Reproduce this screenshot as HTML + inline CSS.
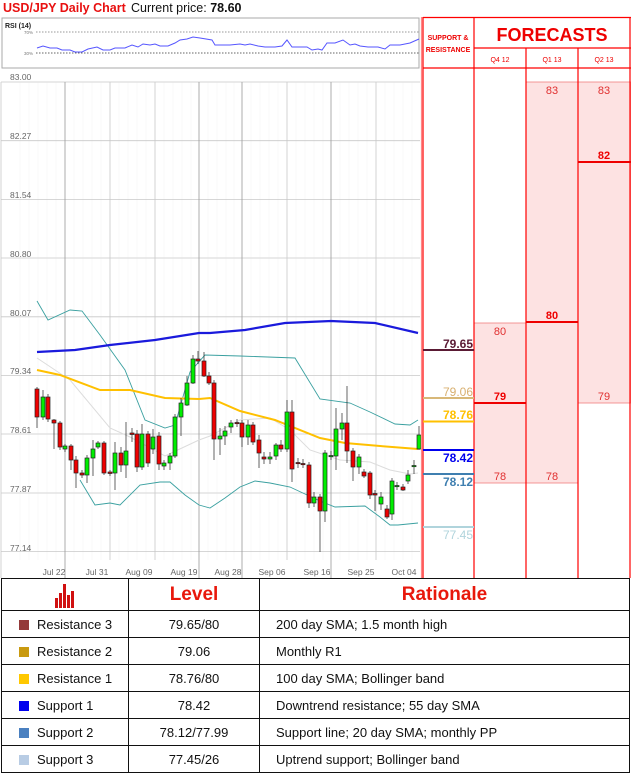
<!DOCTYPE html>
<html><head><meta charset="utf-8"><style>
body{margin:0;width:631px;height:777px;overflow:hidden;background:#fff;font-family:"Liberation Sans",sans-serif}
svg{position:absolute;left:0;top:0}
table{position:absolute;left:1px;top:578px;width:629px;border-collapse:collapse;font-family:"Liberation Sans",sans-serif;font-size:13px;color:#111}
td{border:1.5px solid #111;height:26px;padding:0}
.h td{height:31px;font-weight:bold;color:#e8180c;font-size:19px;text-align:center}
.c{text-align:center}
.sq{display:inline-block;width:10px;height:10px;margin:0 8px 0 17px;vertical-align:-1px}
.r{padding-left:16px}
.ic{position:static;display:block;margin:2px auto 0}
</style></head><body>
<svg width="631" height="578" viewBox="0 0 631 578" font-family="Liberation Sans, sans-serif">
<text x="3" y="12" font-size="12.5" font-weight="bold" fill="#e81010">USD/JPY Daily Chart</text>
<text x="131" y="12" font-size="12.5" fill="#111">Current price: <tspan font-weight="bold">78.60</tspan></text>
<rect x="2" y="18" width="417" height="50" fill="#fff" stroke="#aaa"/>
<text x="5" y="28" font-size="7" font-weight="bold" fill="#222">RSI (14)</text>
<line x1="36" y1="32" x2="419" y2="32" stroke="#777" stroke-dasharray="1.5,1.5" stroke-width="0.8"/>
<line x1="36" y1="53" x2="419" y2="53" stroke="#333" stroke-dasharray="1.5,1.5" stroke-width="0.8"/>
<text x="24" y="34" font-size="4.5" fill="#777">70%</text>
<text x="24" y="55" font-size="4.5" fill="#777">30%</text>
<polyline fill="none" stroke="#5555ff" stroke-width="1" points="37,48 43,46 50,48 57,48 62,50 70,50 75,52 82,52 88,49 97,47 103,50 110,50 115,48 125,48 132,45 138,47 143,44 150,45 155,44 160,46 168,46 175,43 180,40 187,39 193,37 200,38 212,40 215,45 230,45 240,44 245,45 250,44 258,46 265,47 275,47 282,46 287,40 292,47 300,47 307,47 312,50 318,49 322,50 327,43 335,43 343,40 350,45 355,44 360,46 368,47 378,47 385,49 390,45 400,45 410,43 419,39"/>
<g stroke="#f5f5f5" stroke-width="0.6">
<line x1="20" y1="82" x2="20" y2="560"/><line x1="29" y1="82" x2="29" y2="560"/><line x1="38" y1="82" x2="38" y2="560"/><line x1="47" y1="82" x2="47" y2="560"/><line x1="56" y1="82" x2="56" y2="560"/>
<line x1="74" y1="82" x2="74" y2="560"/><line x1="83" y1="82" x2="83" y2="560"/><line x1="92" y1="82" x2="92" y2="560"/><line x1="101" y1="82" x2="101" y2="560"/>
<line x1="119" y1="82" x2="119" y2="560"/><line x1="128" y1="82" x2="128" y2="560"/><line x1="137" y1="82" x2="137" y2="560"/><line x1="146" y1="82" x2="146" y2="560"/>
<line x1="164" y1="82" x2="164" y2="560"/><line x1="173" y1="82" x2="173" y2="560"/><line x1="182" y1="82" x2="182" y2="560"/><line x1="191" y1="82" x2="191" y2="560"/>
<line x1="208" y1="82" x2="208" y2="560"/><line x1="217" y1="82" x2="217" y2="560"/><line x1="226" y1="82" x2="226" y2="560"/><line x1="234" y1="82" x2="234" y2="560"/>
<line x1="251" y1="82" x2="251" y2="560"/><line x1="260" y1="82" x2="260" y2="560"/><line x1="269" y1="82" x2="269" y2="560"/><line x1="278" y1="82" x2="278" y2="560"/>
<line x1="296" y1="82" x2="296" y2="560"/><line x1="305" y1="82" x2="305" y2="560"/><line x1="314" y1="82" x2="314" y2="560"/><line x1="323" y1="82" x2="323" y2="560"/>
<line x1="340" y1="82" x2="340" y2="560"/><line x1="349" y1="82" x2="349" y2="560"/><line x1="358" y1="82" x2="358" y2="560"/><line x1="367" y1="82" x2="367" y2="560"/>
<line x1="385" y1="82" x2="385" y2="560"/><line x1="394" y1="82" x2="394" y2="560"/><line x1="403" y1="82" x2="403" y2="560"/><line x1="412" y1="82" x2="412" y2="560"/>
</g>
<g stroke="#c8c8c8" stroke-width="0.8">
<line x1="1" y1="82" x2="420" y2="82"/><line x1="1" y1="140.7" x2="420" y2="140.7"/><line x1="1" y1="199.4" x2="420" y2="199.4"/><line x1="1" y1="258" x2="420" y2="258"/><line x1="1" y1="316.8" x2="420" y2="316.8"/><line x1="1" y1="375.5" x2="420" y2="375.5"/><line x1="1" y1="434" x2="420" y2="434"/><line x1="1" y1="493" x2="420" y2="493"/><line x1="1" y1="551.6" x2="420" y2="551.6"/>
<line x1="1" y1="82" x2="1" y2="578"/>
<line x1="110" y1="82" x2="110" y2="560"/><line x1="155" y1="82" x2="155" y2="560"/><line x1="287" y1="82" x2="287" y2="560"/><line x1="376" y1="82" x2="376" y2="560"/>
</g>
<g stroke="#9a9a9a" stroke-width="0.8">
<line x1="65" y1="82" x2="65" y2="578"/><line x1="199" y1="82" x2="199" y2="578"/><line x1="242" y1="82" x2="242" y2="578"/><line x1="331" y1="82" x2="331" y2="578"/>
</g>
<g font-size="8.5" fill="#666">
<text x="10" y="80">83.00</text><text x="10" y="139">82.27</text><text x="10" y="198">81.54</text><text x="10" y="257">80.80</text><text x="10" y="316">80.07</text><text x="10" y="374">79.34</text><text x="10" y="433">78.61</text><text x="10" y="492">77.87</text><text x="10" y="551">77.14</text>
</g>
<g font-size="8.5" fill="#666" text-anchor="middle">
<text x="54" y="575">Jul 22</text><text x="97" y="575">Jul 31</text><text x="139" y="575">Aug 09</text><text x="184" y="575">Aug 19</text><text x="228" y="575">Aug 28</text><text x="272" y="575">Sep 06</text><text x="317" y="575">Sep 16</text><text x="361" y="575">Sep 25</text><text x="404" y="575">Oct 04</text>
</g>
<polyline fill="none" stroke="#dcdcdc" stroke-width="1" points="37,358 70,380 110,428 130,437 165,456 199,440 210,436 240,420 270,418 290,430 310,450 340,460 370,462 390,470 410,474 418,473"/>
<polyline fill="none" stroke="#3aa0a0" stroke-width="0.9" points="37,301 48,320 70,310 82,311 100,335 125,370 145,420 165,428 175,425 190,372 205,355 240,356 295,358 320,399 350,403 370,412 395,424 410,425 418,420"/>
<polyline fill="none" stroke="#3aa0a0" stroke-width="0.9" points="80,480 95,505 110,503 120,505 140,485 160,482 170,482 185,495 199,505 210,508 225,498 240,487 255,481 270,483 290,487 320,501 335,507 365,506 380,517 390,525 398,525 418,523"/>
<polyline fill="none" stroke="#ffc000" stroke-width="2" points="37,370 60,375 100,390 130,390 165,398 199,399 210,398 240,411 275,420 320,438 345,443 380,446 418,449"/>
<polyline fill="none" stroke="#1a1adc" stroke-width="2.2" points="37,352 75,350 110,345 155,340 199,333 210,333 245,330 285,323 331,321 375,323 418,333"/>
<g stroke="#222" stroke-width="0.7">
<line x1="37" y1="387" x2="37" y2="428"/><rect x="35" y="389" width="4" height="28" fill="#e00"/>
<line x1="43" y1="390" x2="43" y2="420"/><rect x="41" y="397" width="4" height="20" fill="#0e0"/>
<line x1="48" y1="394" x2="48" y2="422"/><rect x="46" y="397" width="4" height="22" fill="#e00"/>
<line x1="54" y1="419" x2="54" y2="449"/><rect x="52" y="420" width="4" height="3" fill="#e00"/>
<line x1="60" y1="421" x2="60" y2="450"/><rect x="58" y="423" width="4" height="24" fill="#e00"/>
<line x1="65" y1="444" x2="65" y2="452"/><rect x="63" y="446" width="4" height="3" fill="#0e0"/>
<line x1="71" y1="444" x2="71" y2="470"/><rect x="69" y="446" width="4" height="14" fill="#e00"/>
<line x1="76" y1="456" x2="76" y2="488"/><rect x="74" y="460" width="4" height="13" fill="#e00"/>
<line x1="82" y1="470" x2="82" y2="478"/><rect x="80" y="473" width="4" height="2" fill="#e00"/>
<line x1="87" y1="455" x2="87" y2="483"/><rect x="85" y="458" width="4" height="17" fill="#0e0"/>
<line x1="93" y1="440" x2="93" y2="476"/><rect x="91" y="449" width="4" height="9" fill="#0e0"/>
<line x1="98" y1="441" x2="98" y2="449"/><rect x="96" y="443" width="4" height="4" fill="#0e0"/>
<line x1="104" y1="441" x2="104" y2="475"/><rect x="102" y="443" width="4" height="30" fill="#e00"/>
<line x1="110" y1="470" x2="110" y2="476"/><rect x="108" y="472" width="4" height="1.5" fill="#e00"/>
<line x1="115" y1="442" x2="115" y2="490"/><rect x="113" y="453" width="4" height="20" fill="#0e0"/>
<line x1="121" y1="447" x2="121" y2="472"/><rect x="119" y="453" width="4" height="12" fill="#e00"/>
<line x1="126" y1="422" x2="126" y2="478"/><rect x="124" y="451" width="4" height="14" fill="#0e0"/>
<line x1="132" y1="428" x2="132" y2="442"/><rect x="130" y="433" width="4" height="1.5" fill="#e00"/>
<line x1="137" y1="430" x2="137" y2="472"/><rect x="135" y="434" width="4" height="33" fill="#e00"/>
<line x1="142" y1="424" x2="142" y2="470"/><rect x="140" y="434" width="4" height="33" fill="#0e0"/>
<line x1="148" y1="431" x2="148" y2="467"/><rect x="146" y="434" width="4" height="29" fill="#e00"/>
<line x1="153" y1="429" x2="153" y2="454"/><rect x="151" y="437" width="4" height="12" fill="#0e0"/>
<line x1="159" y1="432" x2="159" y2="470"/><rect x="157" y="436" width="4" height="28" fill="#e00"/>
<line x1="164" y1="460" x2="164" y2="470"/><rect x="162" y="463" width="4" height="3" fill="#0e0"/>
<line x1="170" y1="453" x2="170" y2="470"/><rect x="168" y="456" width="4" height="7" fill="#0e0"/>
<line x1="175" y1="414" x2="175" y2="458"/><rect x="173" y="417" width="4" height="39" fill="#0e0"/>
<line x1="181" y1="398" x2="181" y2="436"/><rect x="179" y="403" width="4" height="14" fill="#0e0"/>
<line x1="187" y1="376" x2="187" y2="406"/><rect x="185" y="383" width="4" height="22" fill="#0e0"/>
<line x1="193" y1="355" x2="193" y2="384"/><rect x="191" y="359" width="4" height="24" fill="#0e0"/>
<line x1="198" y1="351" x2="198" y2="364"/><rect x="196" y="359" width="4" height="2" fill="#e00"/>
<line x1="204" y1="352" x2="204" y2="377"/><rect x="202" y="361" width="4" height="15" fill="#e00"/>
<line x1="209" y1="372" x2="209" y2="385"/><rect x="207" y="376" width="4" height="7" fill="#e00"/>
<line x1="214" y1="380" x2="214" y2="460"/><rect x="212" y="383" width="4" height="56" fill="#e00"/>
<line x1="220" y1="428" x2="220" y2="455"/><rect x="218" y="436" width="4" height="3" fill="#0e0"/>
<line x1="225" y1="426" x2="225" y2="445"/><rect x="223" y="431" width="4" height="5" fill="#0e0"/>
<line x1="231" y1="420" x2="231" y2="433"/><rect x="229" y="423" width="4" height="4" fill="#0e0"/>
<line x1="237" y1="419" x2="237" y2="427"/><rect x="235" y="422.5" width="4" height="1.2" fill="#e00"/>
<line x1="242" y1="420" x2="242" y2="447"/><rect x="240" y="423" width="4" height="14" fill="#e00"/>
<line x1="248" y1="420" x2="248" y2="445"/><rect x="246" y="425" width="4" height="12" fill="#0e0"/>
<line x1="253" y1="422" x2="253" y2="445"/><rect x="251" y="425" width="4" height="17" fill="#e00"/>
<line x1="259" y1="435" x2="259" y2="468"/><rect x="257" y="440" width="4" height="13" fill="#e00"/>
<line x1="264" y1="452" x2="264" y2="464"/><rect x="262" y="457" width="4" height="2" fill="#e00"/>
<line x1="270" y1="452" x2="270" y2="464"/><rect x="268" y="457" width="4" height="2" fill="#0e0"/>
<line x1="276" y1="443" x2="276" y2="460"/><rect x="274" y="445" width="4" height="11" fill="#0e0"/>
<line x1="281" y1="440" x2="281" y2="452"/><rect x="279" y="445" width="4" height="4" fill="#e00"/>
<line x1="287" y1="400" x2="287" y2="452"/><rect x="285" y="412" width="4" height="37" fill="#0e0"/>
<line x1="292" y1="400" x2="292" y2="482"/><rect x="290" y="412" width="4" height="57" fill="#e00"/>
<line x1="298" y1="458" x2="298" y2="468"/><rect x="296" y="462.5" width="4" height="1.2" fill="#e00"/>
<line x1="303" y1="459" x2="303" y2="468"/><rect x="301" y="463.5" width="4" height="1.2" fill="#e00"/>
<line x1="309" y1="462" x2="309" y2="508"/><rect x="307" y="465" width="4" height="38" fill="#e00"/>
<line x1="314" y1="492" x2="314" y2="507"/><rect x="312" y="497" width="4" height="6" fill="#0e0"/>
<line x1="320" y1="494" x2="320" y2="552"/><rect x="318" y="497" width="4" height="14" fill="#e00"/>
<line x1="325" y1="450" x2="325" y2="522"/><rect x="323" y="453" width="4" height="58" fill="#0e0"/>
<line x1="331" y1="451" x2="331" y2="460"/><rect x="329" y="455.5" width="4" height="1.2" fill="#0e0"/>
<line x1="336" y1="408" x2="336" y2="470"/><rect x="334" y="429" width="4" height="27" fill="#0e0"/>
<line x1="342" y1="413" x2="342" y2="440"/><rect x="340" y="423" width="4" height="6" fill="#0e0"/>
<line x1="347" y1="386" x2="347" y2="463"/><rect x="345" y="423" width="4" height="28" fill="#e00"/>
<line x1="353" y1="448" x2="353" y2="481"/><rect x="351" y="451" width="4" height="16" fill="#e00"/>
<line x1="359" y1="454" x2="359" y2="474"/><rect x="357" y="457" width="4" height="10" fill="#0e0"/>
<line x1="364" y1="469" x2="364" y2="478"/><rect x="362" y="472" width="4" height="4" fill="#e00"/>
<line x1="370" y1="471" x2="370" y2="499"/><rect x="368" y="473" width="4" height="22" fill="#e00"/>
<line x1="375" y1="490" x2="375" y2="511"/><rect x="373" y="493.5" width="4" height="1.5" fill="#e00"/>
<line x1="381" y1="492" x2="381" y2="510"/><rect x="379" y="497" width="4" height="7" fill="#0e0"/>
<line x1="387" y1="505" x2="387" y2="519"/><rect x="385" y="509" width="4" height="8" fill="#e00"/>
<line x1="392" y1="478" x2="392" y2="520"/><rect x="390" y="481" width="4" height="33" fill="#0e0"/>
<line x1="397" y1="482" x2="397" y2="490"/><rect x="395" y="485.5" width="4" height="1.2" fill="#0e0"/>
<line x1="403" y1="484" x2="403" y2="491"/><rect x="401" y="487" width="4" height="3" fill="#e00"/>
<line x1="408" y1="470" x2="408" y2="484"/><rect x="406" y="475" width="4" height="6" fill="#0e0"/>
<line x1="414" y1="460" x2="414" y2="474"/><rect x="412" y="465.5" width="4" height="1.2" fill="#0e0"/>
<line x1="419" y1="426" x2="419" y2="450"/><rect x="417" y="435" width="4" height="14" fill="#0e0"/>
</g>
<rect x="474" y="323" width="52" height="160" fill="#fde2e2" stroke="#f08080" stroke-width="0.8"/>
<rect x="526" y="82" width="52" height="401" fill="#fde2e2" stroke="#f08080" stroke-width="0.8"/>
<rect x="578" y="82" width="53" height="321" fill="#fde2e2" stroke="#f08080" stroke-width="0.8"/>
<g stroke="#f00" stroke-width="1.2" fill="none">
<line x1="421.5" y1="17" x2="421.5" y2="578" stroke="#f88"/>
<line x1="423" y1="17" x2="423" y2="578"/>
<line x1="423" y1="17.5" x2="631" y2="17.5"/>
<line x1="474" y1="17" x2="474" y2="578"/>
<line x1="474" y1="48" x2="631" y2="48"/>
<line x1="423" y1="68" x2="631" y2="68"/>
<line x1="526" y1="48" x2="526" y2="578"/>
<line x1="578" y1="48" x2="578" y2="578"/>
<line x1="630" y1="17" x2="630" y2="578"/>
</g>
<g stroke="#e00" stroke-width="2">
<line x1="474" y1="403" x2="526" y2="403"/><line x1="526" y1="322" x2="578" y2="322"/><line x1="578" y1="162" x2="631" y2="162"/>
</g>
<text x="448" y="40" font-size="7" font-weight="bold" fill="#e00" text-anchor="middle">SUPPORT &amp;</text>
<text x="448" y="52" font-size="7" font-weight="bold" fill="#e00" text-anchor="middle">RESISTANCE</text>
<text x="552" y="41" font-size="18" font-weight="bold" fill="#e00" text-anchor="middle">FORECASTS</text>
<g font-size="7" fill="#e00" text-anchor="middle"><text x="500" y="62">Q4 12</text><text x="552" y="62">Q1 13</text><text x="604" y="62">Q2 13</text></g>
<g font-size="11" fill="#e03030" text-anchor="middle">
<text x="552" y="94">83</text><text x="604" y="94">83</text><text x="500" y="335">80</text><text x="604" y="400">79</text><text x="500" y="480">78</text><text x="552" y="480">78</text>
</g>
<g font-size="11" font-weight="bold" fill="#e00" text-anchor="middle"><text x="604" y="159">82</text><text x="552" y="319">80</text><text x="500" y="400">79</text></g>
<g stroke-width="2">
<line x1="423" y1="350" x2="474" y2="350" stroke="#5a1a34"/>
<line x1="423" y1="398" x2="474" y2="398" stroke="#d8b878"/>
<line x1="423" y1="421.5" x2="474" y2="421.5" stroke="#ffc000"/>
<line x1="423" y1="450" x2="474" y2="450" stroke="#0000ee"/>
<line x1="423" y1="474" x2="474" y2="474" stroke="#3f7fb0"/>
<line x1="423" y1="527" x2="474" y2="527" stroke="#b0d4dc"/>
</g>
<g font-size="12" font-weight="bold" text-anchor="end">
<text x="473" y="348" fill="#5a1a34">79.65</text>
<text x="473" y="396" fill="#d8b070" font-weight="normal">79.06</text>
<text x="473" y="419" fill="#ffc000">78.76</text>
<text x="473" y="462" fill="#0000ee">78.42</text>
<text x="473" y="486" fill="#3f7fb0">78.12</text>
<text x="473" y="539" fill="#b0d4dc" font-weight="normal">77.45</text>
</g>
</svg>
<table>
<tr class="h"><td style="width:126px"><svg class="ic" width="22" height="25" viewBox="0 0 22 25"><g fill="#d01010"><rect x="1" y="15" width="3" height="10"/><rect x="5" y="10" width="3" height="15"/><rect x="9" y="1" width="3" height="24"/><rect x="13" y="12" width="3" height="13"/><rect x="17" y="8" width="3" height="17"/></g></svg></td><td style="width:130px">Level</td><td>Rationale</td></tr>
<tr><td><span class="sq" style="background:#943a3a"></span>Resistance 3</td><td class="c">79.65/80</td><td class="r">200 day SMA; 1.5 month high</td></tr>
<tr><td><span class="sq" style="background:#c99a10"></span>Resistance 2</td><td class="c">79.06</td><td class="r">Monthly R1</td></tr>
<tr><td><span class="sq" style="background:#ffc800"></span>Resistance 1</td><td class="c">78.76/80</td><td class="r">100 day SMA; Bollinger band</td></tr>
<tr><td><span class="sq" style="background:#0000ee"></span>Support 1</td><td class="c">78.42</td><td class="r">Downtrend resistance; 55 day SMA</td></tr>
<tr><td><span class="sq" style="background:#4a80c0"></span>Support 2</td><td class="c">78.12/77.99</td><td class="r">Support line; 20 day SMA; monthly PP</td></tr>
<tr><td><span class="sq" style="background:#b8cce4"></span>Support 3</td><td class="c">77.45/26</td><td class="r">Uptrend support; Bollinger band</td></tr>
</table>
</body></html>
